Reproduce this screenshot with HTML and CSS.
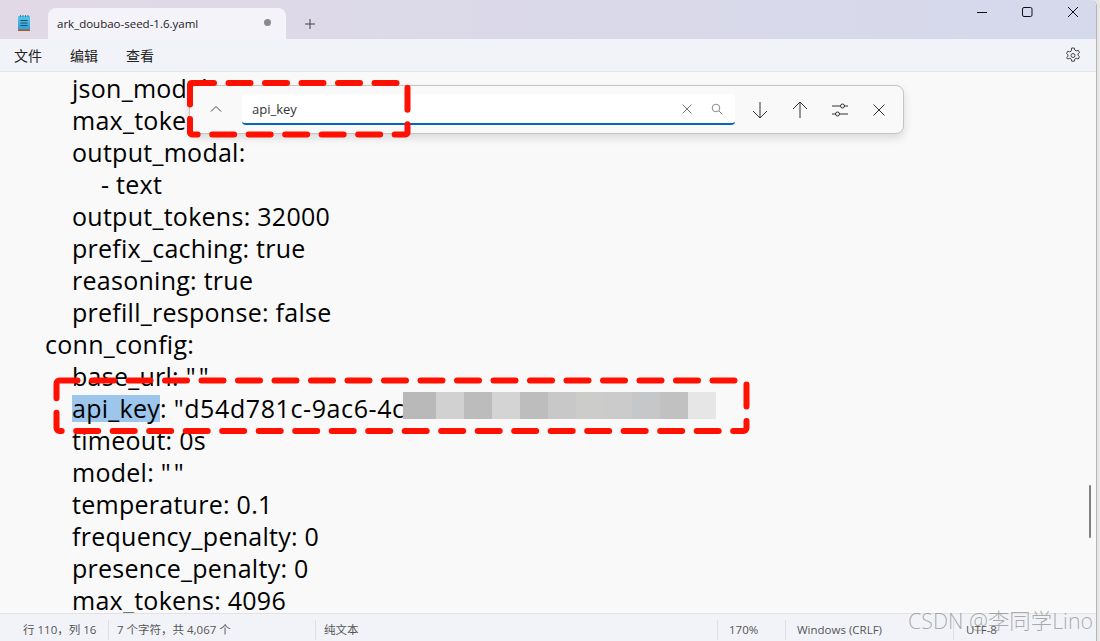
FILE: index.html
```html
<!DOCTYPE html>
<html lang="zh-CN">
<head>
<meta charset="utf-8">
<title>ark_doubao-seed-1.6.yaml</title>
<link rel="stylesheet" href="styles.css">
</head>
<body>
<div class="app">
  <header class="tabbar">
    <svg class="app-icon" width="12" height="16" viewBox="0 0 12 16"><defs><linearGradient id="pad" x1="0" y1="0" x2="0" y2="1"><stop offset="0" stop-color="#55c4ec"/><stop offset="1" stop-color="#2f9fd2"/></linearGradient></defs><rect x="0" y="1" width="12" height="14" rx="1" fill="url(#pad)"/><rect x="0" y="14.500" width="12" height="1.500" fill="#b5522a"/><path d="M2.500 0v2M5 0v2M7.500 0v2M10 0v2" stroke="#2a7fa5" stroke-width="1"/><path d="M2.500 5.500h7M2.500 8h7M2.500 10.500h7" stroke="#14506e" stroke-width="1"/></svg>
    <div class="tab">
      <span class="tab-name">ark_doubao-seed-1.6.yaml</span>
      <span class="tab-dot"></span>
    </div>
    <svg class="icon-plus" width="12" height="12" viewBox="0 0 12 12"><path d="M6 1v10M1 6h10" stroke="#444" stroke-width="1"/></svg>
    <div class="winctl">
      <svg width="46" height="24" viewBox="0 0 46 24"><path d="M19 12.500h10" stroke="#111" stroke-width="1"/></svg>
      <svg width="46" height="24" viewBox="0 0 46 24"><rect x="18.500" y="7.500" width="9.500" height="9" rx="1.500" fill="none" stroke="#111" stroke-width="1"/></svg>
      <svg width="46" height="24" viewBox="0 0 46 24"><path d="M18 7l10 10M28 7l-10 10" stroke="#111" stroke-width="1"/></svg>
    </div>
  </header>
  <nav class="menubar">
    <span class="menu-item">文件</span>
    <span class="menu-item">编辑</span>
    <span class="menu-item">查看</span>
    <svg class="gear" width="16" height="16" viewBox="0 0 16 16"><path d="M6.700 1h2.600l.4 2 1.500.9 2-.7 1.300 2.300-1.500 1.300v1.600l1.500 1.300-1.300 2.300-2-.7-1.500.9-.4 2H6.700l-.4-2-1.500-.9-2 .7L1.500 10.700 3 9.400V7.800L1.500 6.500l1.300-2.300 2 .7 1.500-.9z" fill="none" stroke="#444" stroke-width="1"/><circle cx="8" cy="8.500" r="2" fill="none" stroke="#444" stroke-width="1"/></svg>
  </nav>
  <main class="editor">
    <div class="l i2">json_modal: </div>
    <div class="l i2">max_tokens: </div>
    <div class="l i2">output_modal:</div>
    <div class="l i3">- text</div>
    <div class="l i2">output_tokens: 32000</div>
    <div class="l i2">prefix_caching: true</div>
    <div class="l i2">reasoning: true</div>
    <div class="l i2">prefill_response: false</div>
    <div class="l i1">conn_config:</div>
    <div class="l i2">base_url: <span class="q">""</span></div>
    <div class="l i2 keyline"><span class="sel">api_key</span>: <span class="val">"d54d781c-9ac6-4c</span></div>
    <div class="l i2">timeout: 0s</div>
    <div class="l i2">model: <span class="q">""</span></div>
    <div class="l i2">temperature: 0.1</div>
    <div class="l i2">frequency_penalty: 0</div>
    <div class="l i2">presence_penalty: 0</div>
    <div class="l i2">max_tokens: 4096</div>
    <div class="mosaic">
      <i class="m0"></i><i class="m1"></i><i class="m2"></i><i class="m3"></i><i class="m4"></i><i class="m5"></i><i class="m6"></i><i class="m7"></i><i class="m8"></i><i class="m9"></i><i class="m10"></i>
    </div>
    <div class="thumb"></div>
  </main>
  <footer class="statusbar">
    <span class="st st-pos">行 110，列 16</span>
    <span class="st st-count">7 个字符，共 4,067 个</span>
    <span class="st st-type">纯文本</span>
    <span class="st st-zoom">170%</span>
    <span class="st st-eol">Windows (CRLF)</span>
    <span class="st st-enc">UTF-8</span>
  </footer>
  <div class="find">
    <svg class="chev" width="14" height="14" viewBox="0 0 14 14"><path d="M2 9.500l5-5 5 5" fill="none" stroke="#444" stroke-width="1"/></svg>
    <div class="find-input">
      <span class="find-text">api_key</span>
      <svg width="12" height="12" viewBox="0 0 12 12"><path d="M1.500 1.500l9 9M10.500 1.500l-9 9" stroke="#777" stroke-width="1"/></svg>
      <svg class="mag" width="12" height="12" viewBox="0 0 12 12"><circle cx="5" cy="5" r="3.800" fill="none" stroke="#888" stroke-width="1"/><path d="M8 8l3.300 3.300" stroke="#888" stroke-width="1"/></svg>
    </div>
    <div class="find-actions">
      <svg width="16" height="18" viewBox="0 0 16 18"><path d="M8 1v16M1 10l7 7 7-7" fill="none" stroke="#333" stroke-width="1"/></svg>
      <svg width="16" height="18" viewBox="0 0 16 18"><path d="M8 17V1M1 8l7-7 7 7" fill="none" stroke="#333" stroke-width="1"/></svg>
      <svg width="16" height="16" viewBox="0 0 16 16"><path d="M0 4h16M0 12h16" stroke="#333" stroke-width="1"/><circle cx="10.500" cy="4" r="2" fill="#f9f9f9" stroke="#333" stroke-width="1"/><circle cx="5.500" cy="12" r="2" fill="#f9f9f9" stroke="#333" stroke-width="1"/></svg>
      <svg width="14" height="14" viewBox="0 0 14 14"><path d="M1.500 1.500l11 11M12.500 1.500l-11 11" stroke="#333" stroke-width="1"/></svg>
    </div>
  </div>
  <svg class="marks" width="1100" height="641" viewBox="0 0 1100 641">
    <rect x="190" y="83" width="217.500" height="51.500" rx="2" class="dash"/>
    <rect x="56.500" y="380.500" width="690" height="50.500" rx="3" class="dash dash-wide"/>
  </svg>
  <div class="wm">CSDN @李同学Lino</div>
</div>
</body>
</html>
```
FILE: styles.css
```css
* { box-sizing: border-box; }
html, body { margin: 0; height: 100%; }
body { background: #e6e6e6; overflow: hidden; }
.app {
  position: relative;
  width: 1097px;
  height: 641px;
  display: flex;
  flex-direction: column;
  font-family: "Open Sans", "Noto Sans CJK SC", sans-serif;
  color: #1a1a1a;
  background: #f9f9f9;
  border-right: 1px solid #b5b5b5;
  border-top-right-radius: 6px;
}
.tabbar {
  height: 39px;
  flex: none;
  display: flex;
  align-items: flex-end;
  background: linear-gradient(90deg, #e2d9e6 0%, #dcd9e8 35%, #d5d9ec 100%);
  padding-left: 18px;
  border-top-right-radius: 6px;
}
.app-icon { margin: 0 0 8px 0; }
.tab {
  width: 238px;
  height: 31px;
  margin-left: 18px;
  background: #f3f3f9;
  border-radius: 8px 8px 0 0;
  display: flex;
  align-items: center;
  justify-content: space-between;
  padding: 0 15px 0 9px;
}
.tab-name { font-size: 11.500px; color: #222; }
.tab-dot { width: 7px; height: 7px; border-radius: 50%; background: #8a8a8a; margin-top: -2px; }
.icon-plus { margin: 0 0 9px 18px; }
.winctl { margin-left: auto; align-self: flex-start; display: flex; }
.menubar {
  height: 33px;
  flex: none;
  display: flex;
  align-items: center;
  background: #f2f3f9;
  border-bottom: 1px solid #e3e3e6;
  padding-left: 14px;
  gap: 28px;
  font-size: 14px;
}
.menu-item { color: #222; }
.gear { margin-left: auto; margin-right: 15px; }
.editor {
  flex: 1;
  position: relative;
  overflow: hidden;
  font-size: 25px;
  letter-spacing: .27px;
  line-height: 32px;
  color: #000;
}
.l { white-space: pre; }
.i1 { padding-left: 45px; }
.i2 { padding-left: 72px; }
.i3 { padding-left: 101px; }
.q { letter-spacing: 3px; }
.val { letter-spacing: .6px; }
.sel { background: #9cc6ec; display: inline-block; height: 27px; line-height: 27px; }
.mosaic {
  position: absolute;
  left: 403px;
  top: 320px;
  height: 27px;
  display: flex;
}
.mosaic i { display: block; width: 28px; height: 27px; }
.mosaic .m0 { width: 33px; background: #b9b9b9; }
.m1 { background: #d1d1d1; }
.m2 { background: #bbbcbb; }
.m3 { background: #d4d4d4; }
.m4 { background: #bdbdbd; }
.m5 { background: #c8c8c8; }
.m6 { background: #cccccb; }
.m7 { background: #cbcbcb; }
.m8 { background: #c6c7c9; }
.m9 { background: #c0c1c0; }
.m10 { background: #e6e6e6; }
.thumb {
  position: absolute;
  left: 1089px;
  top: 413px;
  width: 2px;
  height: 53px;
  background: #808080;
  border-radius: 1px;
}
.statusbar {
  height: 28px;
  flex: none;
  display: flex;
  align-items: center;
  background: #f2f3f9;
  border-top: 1px solid #e3e3e6;
  font-size: 11.500px;
  color: #555;
  padding-top: 5px;
}
.st {
  height: 20px;
  line-height: 20px;
  padding-left: 8px;
  border-left: 1px solid #dfdfe3;
  white-space: nowrap;
}
.st-pos { width: 108px; border-left: 0; padding-left: 23px; }
.st-count { width: 207px; }
.st-type { width: 402px; }
.st-zoom { width: 68px; padding-left: 11px; }
.st-eol { width: 168px; padding-left: 11px; }
.st-enc { padding-left: 12px; }
.find {
  position: absolute;
  left: 189px;
  top: 85px;
  width: 715px;
  height: 49px;
  display: flex;
  align-items: center;
  background: #f9f9f9;
  border: 1px solid #c4c4c4;
  border-radius: 8px;
  box-shadow: 0 4px 10px rgba(0,0,0,.13);
  padding-left: 19px;
}
.chev { margin-top: -1px; }
.find-input {
  margin-left: 19px;
  width: 493px;
  height: 31px;
  background: #fff;
  border-bottom: 2px solid #0067c0;
  border-radius: 4px;
  display: flex;
  align-items: center;
  padding: 0 12px 0 10px;
  gap: 18px;
}
.find-text { flex: 1; font-size: 13px; line-height: 29px; padding-top: 1px; color: #333; }
.find-actions { display: flex; align-items: center; gap: 24px; margin-left: 17px; }
.marks { position: absolute; left: 0; top: 0; pointer-events: none; }
.dash { fill: none; stroke: #ff1000; stroke-width: 6; stroke-linecap: round; stroke-dasharray: 22 14.500; }
.dash-wide { stroke-dashoffset: 4; }
.wm {
  position: absolute;
  left: 908px;
  top: 606px;
  font-size: 21.400px;
  font-weight: 300;
  line-height: 30px;
  color: rgba(120,120,120,.6);
  white-space: nowrap;
}
```
